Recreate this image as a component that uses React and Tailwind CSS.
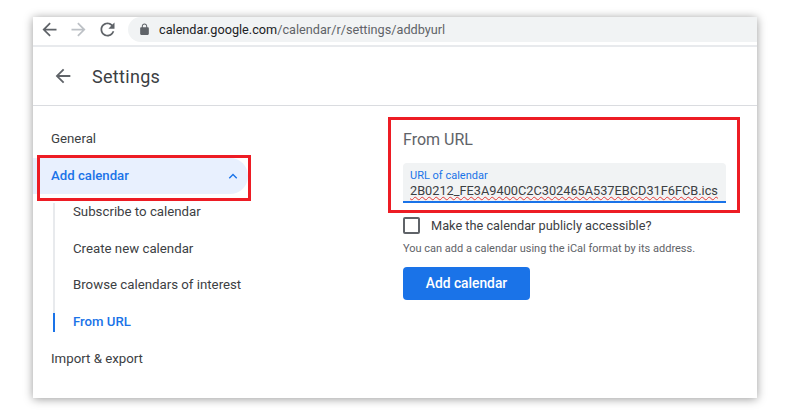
const BACK = "M20 11H7.83l5.59-5.59L12 4l-8 8 8 8 1.41-1.41L7.83 13H20v-2z";
const FORWARD = "M4 11h12.17l-5.59-5.59L12 4l8 8-8 8-1.41-1.41L16.17 13H4v-2z";
const RELOAD = "M17.65 6.35C16.2 4.9 14.21 4 12 4c-4.42 0-7.99 3.58-7.99 8s3.57 8 7.99 8c3.73 0 6.84-2.55 7.73-6h-2.08c-.82 2.33-3.04 4-5.65 4-3.31 0-6-2.69-6-6s2.69-6 6-6c1.66 0 3.14.69 4.22 1.78L13 11h7V4l-2.35 2.35z";
const LOCK = "M18 8h-1V6c0-2.76-2.24-5-5-5S7 3.24 7 6v2H6c-1.1 0-2 .9-2 2v10c0 1.1.9 2 2 2h12c1.1 0 2-.9 2-2V10c0-1.1-.9-2-2-2zM8.9 8V6c0-1.71 1.39-3.1 3.1-3.1 1.71 0 3.1 1.39 3.1 3.1v2H8.9z";

function Icon({ d, className }) {
  return (
    <svg viewBox="0 0 24 24" fill="currentColor" className={className}>
      <path d={d} />
    </svg>
  );
}

function SubItem({ children, active }) {
  return (
    <div className="relative flex h-[36.7px] items-center pl-[40px]">
      <span className={active ? "text-[13.2px] font-medium text-[#1a73e8]" : "text-[13.25px] text-[#3c4043]"}>
        {children}
      </span>
      {active && <span className="absolute left-[20px] top-[9px] h-[19px] w-[2px] bg-[#1a73e8]" />}
    </div>
  );
}

export default function App() {
  return (
    <div className="h-[415px] w-[790px] overflow-hidden bg-white pl-[33px] pt-[17px] font-['Roboto',sans-serif]">
      <div className="relative flex h-[381px] w-[724px] flex-col bg-white shadow-[0_1px_9px_rgba(0,0,0,0.4)]">
        <div className="flex h-[30px] shrink-0 items-start border-b-2 border-[#e8eaed]">
          <div className="flex h-[25px] items-center gap-[8px] pl-[6px] pr-[10px]">
            <Icon d={BACK} className="h-[21px] w-[21px] text-[#5f6368]" />
            <Icon d={FORWARD} className="h-[21px] w-[21px] text-[#bdc1c6]" />
            <Icon d={RELOAD} className="h-[21px] w-[21px] text-[#5f6368]" />
          </div>
          <div className="flex h-[25px] flex-1 items-center rounded-l-full bg-[#f1f3f4] pl-[10px]">
            <Icon d={LOCK} className="h-[13px] w-[13px] text-[#5f6368]" />
            <span className="ml-[8px] text-[12.7px] text-[#5f6368]">
              <span className="text-[#202124]">calendar.google.com</span>/calendar/r/settings/addbyurl
            </span>
          </div>
        </div>

        <div className="flex h-[59px] shrink-0 items-center border-b border-[#dadce0] pl-[19px]">
          <Icon d={BACK} className="h-[22px] w-[22px] text-[#5f6368]" />
          <span className="ml-[18px] text-[18px] tracking-[0.3px] text-[#3c4043]">Settings</span>
        </div>

        <div className="flex flex-1">
          <div className="w-[370px] shrink-0 pt-[15px]">
            <div className="flex h-[36.7px] items-center pl-[18px] text-[13.25px] text-[#3c4043]">General</div>
            <div className="flex h-[36px] w-[215px] items-center justify-between rounded-r-full bg-[#e8f0fe] pl-[18px] pr-[10px]">
              <span className="text-[13.2px] font-medium text-[#1a73e8]">Add calendar</span>
              <svg viewBox="0 0 12 8" fill="none" stroke="#1a73e8" strokeWidth="1.8" className="h-[6px] w-[10px]">
                <path d="M1 7l5-5 5 5" />
              </svg>
            </div>
            <div className="relative">
              <span className="absolute left-[20px] top-[9px] bottom-[9px] w-[2px] bg-[#e8eaed]" />
              <SubItem>Subscribe to calendar</SubItem>
              <SubItem>Create new calendar</SubItem>
              <SubItem>Browse calendars of interest</SubItem>
              <SubItem active>From URL</SubItem>
            </div>
            <div className="flex h-[36.7px] items-center pl-[18px] text-[13.25px] text-[#3c4043]">Import &amp; export</div>
          </div>

          <div className="w-[323px] pt-[24px]">
            <div className="text-[16px] leading-[20px] text-[#5f6368]">From URL</div>
            <div className="mt-[13px] flex h-[40px] flex-col rounded-t border-b-2 border-[#1a73e8] bg-[#f1f3f4] pl-[7px] pt-[6px]">
              <span className="text-[11px] leading-[13px] text-[#1a73e8]">URL of calendar</span>
              <span className="mt-[1px] text-[12.75px] leading-[16px] text-[#3c4043] underline decoration-[#e53935] decoration-wavy decoration-1 underline-offset-1">
                2B0212_FE3A9400C2C302465A537EBCD31F6FCB.ics
              </span>
            </div>
            <div className="mt-[13px] flex items-center">
              <span className="h-[17px] w-[17px] rounded-[2px] border-2 border-[#5f6368]" />
              <span className="ml-[11px] text-[12.75px] text-[#3c4043]">Make the calendar publicly accessible?</span>
            </div>
            <div className="mt-[7px] text-[11px] leading-[14px] text-[#5f6368]">
              You can add a calendar using the iCal format by its address.
            </div>
            <button className="mt-[11px] flex h-[33px] w-[127px] items-center justify-center rounded bg-[#1a73e8] text-[13.8px] font-medium text-white">
              Add calendar
            </button>
          </div>
        </div>

        <div className="absolute left-[4px] top-[138px] h-[46px] w-[214px] border-[3px] border-[#ed1c24]" />
        <div className="absolute left-[355px] top-[100px] h-[96px] w-[352px] border-[3px] border-[#ed1c24]" />
      </div>
    </div>
  );
}
